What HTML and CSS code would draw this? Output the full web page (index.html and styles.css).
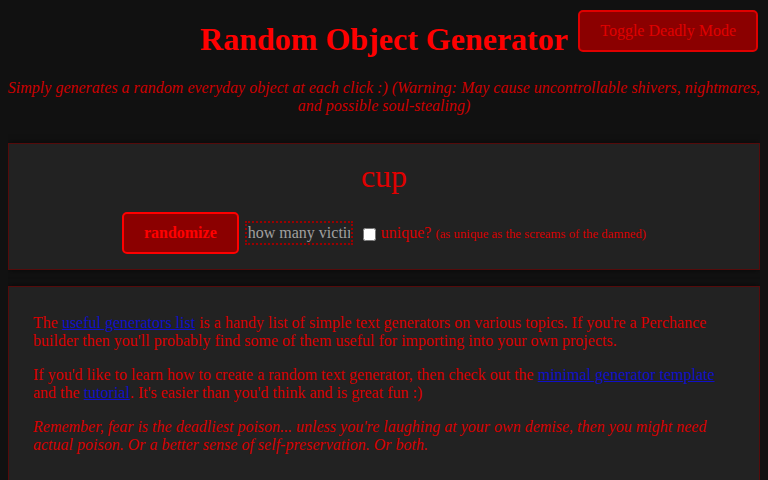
FILE: index.html
```html
<!DOCTYPE html>
<html lang="en">
<head>
<meta charset="utf-8">
<title>Random Object Generator</title>
<link rel="stylesheet" href="styles.css">
</head>
<body>
  <button class="mode-toggle">Toggle Deadly Mode</button>
  <header class="masthead">
    <h1 class="title">Random Object Generator</h1>
    <p class="tagline">Simply generates a random everyday object at each click :) (Warning: May cause uncontrollable shivers, nightmares, and possible soul-stealing)</p>
  </header>

  <section class="card generator">
    <div class="output">cup</div>
    <div class="controls">
      <button class="randomize">randomize</button>
      <input class="count" type="text" placeholder="how many victims?">
      <label class="unique">
        <input type="checkbox">
        <span>unique?</span>
        <small>(as unique as the screams of the damned)</small>
      </label>
    </div>
  </section>

  <section class="card info">
    <p>The <a href="#">useful generators list</a> is a handy list of simple text generators on various topics. If you're a Perchance builder then you'll probably find some of them useful for importing into your own projects.</p>
    <p>If you'd like to learn how to create a random text generator, then check out the <a href="#">minimal generator template</a> and the <a href="#">tutorial</a>. It's easier than you'd think and is great fun :)</p>
    <p class="warning">Remember, fear is the deadliest poison... unless you're laughing at your own demise, then you might need actual poison. Or a better sense of self-preservation. Or both.</p>
  </section>
</body>
</html>
```
FILE: styles.css
```css
html {
  background: #111;
}

body {
  margin: 0 8px;
  background: #111;
  color: #d80000;
  font-family: "Liberation Serif", "Times New Roman", serif;
  font-size: 16px;
}

.mode-toggle {
  position: absolute;
  top: 10px;
  right: 10px;
  padding: 10px 20px;
  background: #8b0000;
  color: #e00000;
  border: 2px solid #e00000;
  border-radius: 5px;
  font-family: inherit;
  font-size: 16px;
  line-height: normal;
}

.masthead {
  padding-top: 21px;
  text-align: center;
}

.title {
  margin: 0 0 21px;
  font-size: 32px;
  font-weight: bold;
  color: #f00;
}

.tagline {
  margin: 0 -4px 28px;
  font-style: italic;
  color: #cc0000;
}

.card {
  background: #222;
  border: 1px solid #550b0b;
  box-shadow: 0 0 6px rgba(0, 0, 0, 0.6);
}

.generator {
  padding: 14px 16px 15px;
  text-align: center;
}

.output {
  font-size: 32px;
  color: #e00000;
}

.controls {
  margin-top: 17px;
  display: flex;
  justify-content: center;
  align-items: center;
  gap: 6px;
}

.randomize {
  padding: 10px 20px;
  background: #8b0000;
  color: #f00;
  border: 2px solid #f00;
  border-radius: 5px;
  font-family: inherit;
  font-size: 16px;
  font-weight: bold;
  line-height: normal;
}

.count {
  width: 102px;
  padding: 1px 1px;
  background: transparent;
  border: 2px dotted #9a0000;
  color: #ccc;
  font-family: "Liberation Serif", "Times New Roman", serif;
  font-size: 16px;
}

.count::placeholder {
  color: #a0a0a0;
  font-family: "Liberation Serif", "Times New Roman", serif;
}

.unique {
  display: flex;
  align-items: center;
  gap: 4px;
  margin-left: 4px;
  color: #d80000;
}

.unique input {
  margin: 3px 1px 0 0;
  width: 13px;
  height: 13px;
}

.unique small {
  font-size: 0.8em;
  margin-top: 2px;
}

.info {
  margin-top: 16px;
  padding: 27px 24px 24px;
}

.info p {
  margin: 0 0 16px;
}

.info a {
  color: #1010c8;
  text-decoration: underline;
}

.info .warning {
  font-style: italic;
}
```
